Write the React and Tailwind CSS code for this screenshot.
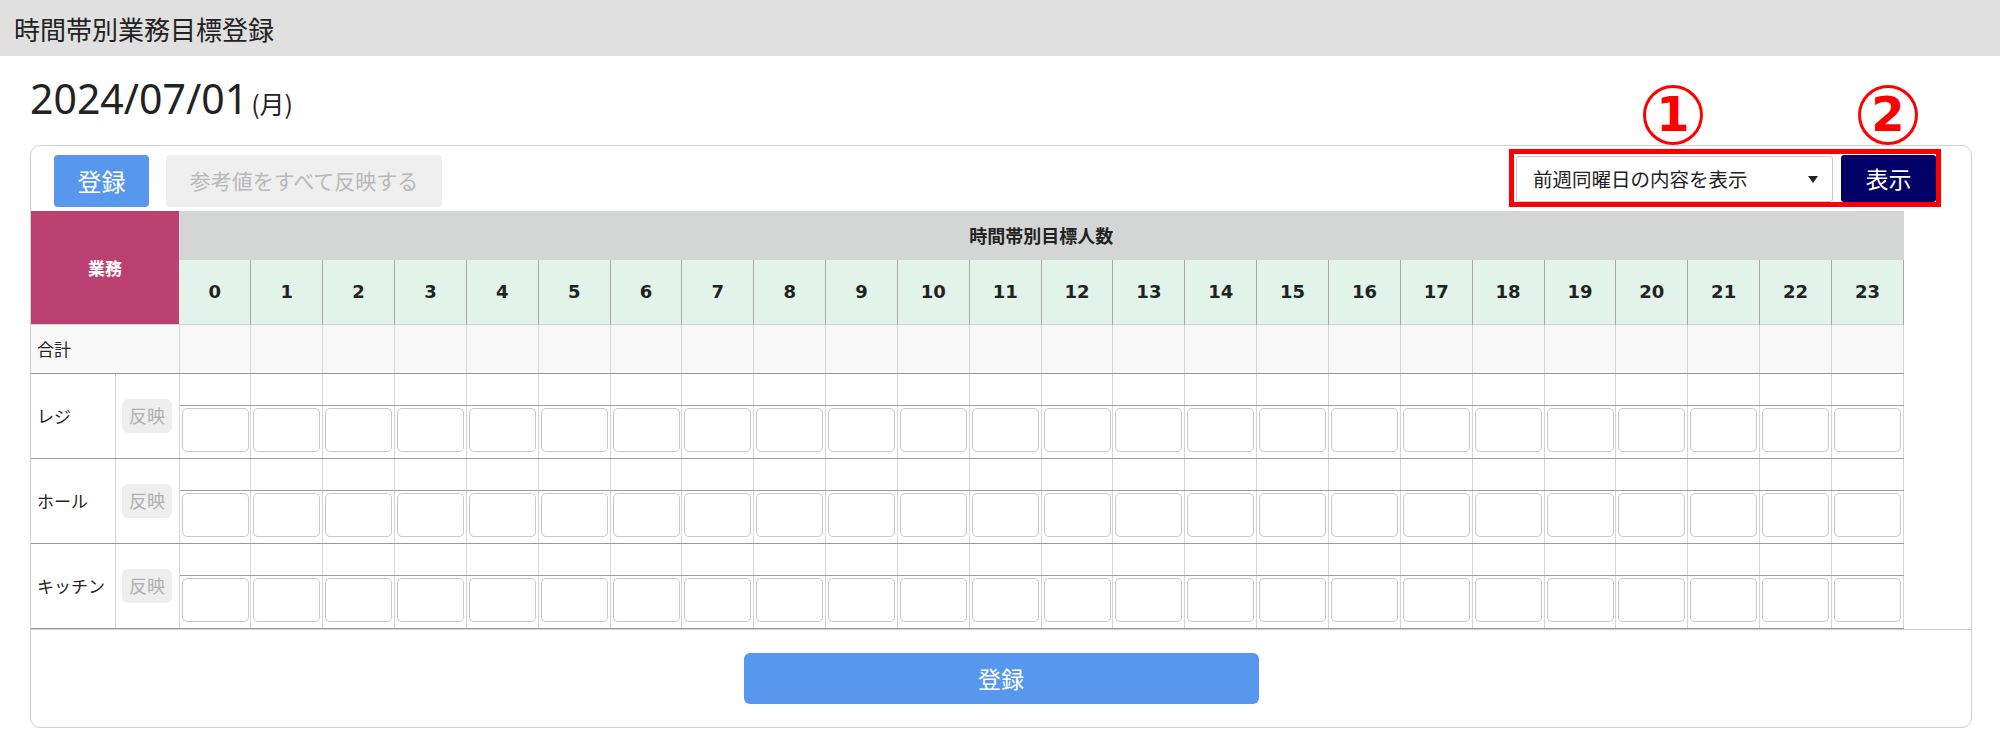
import React from "react";

const HOURS = Array.from({ length: 24 }, (_, i) => i);
const TASKS = ["レジ", "ホール", "キッチン"];

const JP = "font-['Noto_Sans_CJK_JP',sans-serif]";

const Marker = ({ n, className }) => (
  <div
    className={`absolute top-[85px] w-[60px] h-[60px] rounded-full border-[3px] border-[#ff0000] flex items-center justify-center text-[#ff0000] text-[48px] font-bold leading-none font-['DejaVu_Sans',sans-serif] ${className}`}
  >
    <span className="-mt-[2px]">{n}</span>
  </div>
);

export default function App() {
  return (
    <div className={`relative w-[2000px] h-[750px] bg-white text-[#222] ${JP}`}>
      <div className="h-[56px] bg-[#e0e0e0] flex items-center pl-[14px] text-[26px] text-[#222]">
        時間帯別業務目標登録
      </div>

      <div className="mt-[22px] ml-[30px] flex items-baseline h-[40px] leading-none">
        <span className="text-[41px] font-['Noto_Sans',sans-serif]">2024/07/01</span>
        <span className="text-[25px] ml-[3px]">(月)</span>
      </div>

      <Marker n="1" className="left-[1643px]" />
      <Marker n="2" className="left-[1858px]" />

      <div className="mt-[27px] ml-[30px] w-[1942px] border border-[#d0d0d0] rounded-[10px] bg-transparent">
        {/* toolbar */}
        <div className="h-[65px] flex items-start justify-between">
          <div className="flex gap-[17px] pl-[23px] pt-[9px]">
            <button className="w-[95px] h-[52px] rounded-[4px] bg-[#5897ee] text-white text-[24px]">
              登録
            </button>
            <button className="w-[276px] h-[52px] rounded-[4px] bg-[#efefef] text-[#b8b8b8] text-[21px]">
              参考値をすべて反映する
            </button>
          </div>
          <div className="mt-[3px] mr-[30px] flex gap-[8px] border-[5px] border-[#ff0000] pl-[2px] pt-[2px]">
            <div className="w-[317px] h-[46px] border border-[#c8c8c8] rounded-[3px] bg-white flex items-center justify-between pl-[16px] pr-[14px] text-[19.5px] text-[#222]">
              <span>前週同曜日の内容を表示</span>
              <span className="w-0 h-0 border-l-[5px] border-r-[5px] border-t-[7px] border-l-transparent border-r-transparent border-t-[#222]" />
            </div>
            <button className="w-[95px] h-[47px] -mt-[1px] rounded-[3px] bg-[#000066] text-white text-[23px]">
              表示
            </button>
          </div>
        </div>

        {/* table */}
        <div className="border-b border-[#d0d0d0]">
          <table className="w-[1873px] table-fixed border-collapse">
            <colgroup>
              <col className="w-[84px]" />
              <col className="w-[64px]" />
              {HOURS.map((h) => (
                <col key={h} />
              ))}
            </colgroup>
            <thead>
              <tr>
                <th
                  colSpan={2}
                  rowSpan={2}
                  className="p-0 bg-[#bb4170] text-white text-[17px] font-bold"
                >
                  業務
                </th>
                <th
                  colSpan={24}
                  className="p-0 h-[49px] bg-[#d4d5d5] text-[18px] font-bold text-[#222]"
                >
                  時間帯別目標人数
                </th>
              </tr>
              <tr>
                {HOURS.map((h) => (
                  <th
                    key={h}
                    className="p-0 h-[64px] bg-[#e2f3e9] border-r border-[#a8a8a8] text-[18px] font-bold text-[#222] font-['DejaVu_Sans',sans-serif]"
                  >
                    {h}
                  </th>
                ))}
              </tr>
            </thead>
            <tbody>
              <tr>
                <td
                  colSpan={2}
                  className="p-0 pl-[6px] h-[49px] bg-[#f8f8f8] border-t border-r border-b border-t-[#d0d0d0] border-r-[#d6d6d6] border-b-[#999] text-[17px]"
                >
                  合計
                </td>
                {HOURS.map((h) => (
                  <td
                    key={h}
                    className="p-0 bg-[#f8f8f8] border-t border-r border-b border-t-[#d0d0d0] border-r-[#d6d6d6] border-b-[#999]"
                  />
                ))}
              </tr>
              {TASKS.map((t) => (
                <React.Fragment key={t}>
                  <tr>
                    <td
                      rowSpan={2}
                      className="p-0 pl-[6px] border-r border-b border-r-[#d6d6d6] border-b-[#999] text-[17px]"
                    >
                      {t}
                    </td>
                    <td
                      rowSpan={2}
                      className="p-0 border-r border-b border-r-[#d6d6d6] border-b-[#999]"
                    >
                      <div className="flex justify-center">
                        <button className="w-[50px] h-[34px] rounded-[6px] bg-[#eeeeee] text-[#b0b0b0] text-[18px]">
                          反映
                        </button>
                      </div>
                    </td>
                    {HOURS.map((h) => (
                      <td
                        key={h}
                        className="p-0 h-[32px] border-r border-b border-r-[#d6d6d6] border-b-[#9e9e9e]"
                      />
                    ))}
                  </tr>
                  <tr>
                    {HOURS.map((h) => (
                      <td
                        key={h}
                        className="p-0 pt-[2px] pl-[2px] pb-[6px] h-[52px] align-top border-r border-b border-r-[#d6d6d6] border-b-[#999]"
                      >
                        <input
                          type="text"
                          className="block w-[67px] h-[44px] rounded-[5px] border border-[#c8c8c8] bg-white"
                        />
                      </td>
                    ))}
                  </tr>
                </React.Fragment>
              ))}
            </tbody>
          </table>
        </div>

        {/* footer */}
        <div className="h-[97px] flex items-center justify-center">
          <button className="w-[515px] h-[51px] rounded-[6px] bg-[#5897ee] text-white text-[23px]">
            登録
          </button>
        </div>
      </div>
    </div>
  );
}
